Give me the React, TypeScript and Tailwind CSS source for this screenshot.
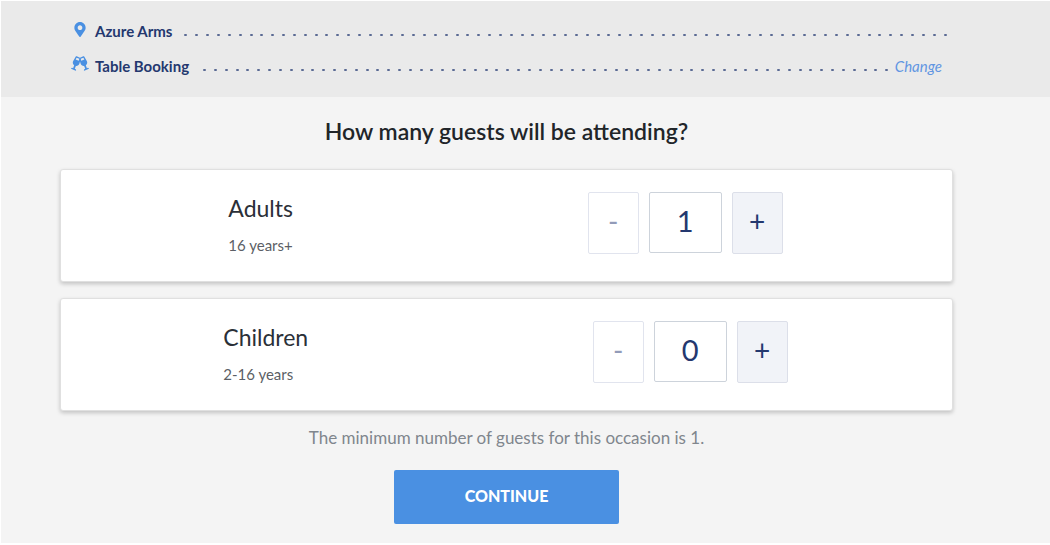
import { useState } from "react";
import { FaGlassCheers, FaMapMarkerAlt } from "react-icons/fa";

function Leader({ dots }: { dots: number }) {
  return (
    <div className="mt-2 flex min-w-0 flex-1 justify-between overflow-hidden" aria-hidden="true">
      {Array.from({ length: dots }, (_, i) => (
        <span key={i} className="h-0.5 w-[3px] shrink-0 rounded-[1px] bg-[#5a6a93]" />
      ))}
    </div>
  );
}

function Stepper({ id, value, min, onChange }: { id: string; value: number; min: number; onChange: (n: number) => void }) {
  return (
    <div className="flex gap-2.5">
      <button
        type="button"
        aria-label="Decrease"
        disabled={value <= min}
        onClick={() => onChange(value - 1)}
        className="h-[62px] w-[51px] rounded-xs border border-[#e1e4ee] bg-white pb-1 text-[28px] text-[#24386f] disabled:text-[#929bb8]"
      >
        -
      </button>
      <input
        id={id}
        type="text"
        inputMode="numeric"
        value={value}
        onChange={(e) => onChange(Math.max(min, Number(e.target.value) || min))}
        className="h-[61px] w-[73px] rounded-xs border border-[#cdd3db] bg-white pb-1 text-center text-[29px] text-[#24386f] outline-none"
      />
      <button
        type="button"
        aria-label="Increase"
        onClick={() => onChange(value + 1)}
        className="h-[62px] w-[51px] rounded-xs border border-[#dcdfe9] bg-[#f1f3f8] pb-1 text-[28px] text-[#24386f]"
      >
        +
      </button>
    </div>
  );
}

function GuestCard(props: { id: string; title: string; note: string; value: number; min: number; onChange: (n: number) => void }) {
  return (
    <div className="flex items-start justify-around rounded-[3px] border border-[#e0e0e0] bg-white pt-[22px] pr-[22px] pb-[26px] pl-5 shadow-[0_2px_4px_rgba(0,0,0,0.2)]">
      <div>
        <label htmlFor={props.id} className="block text-[23px] leading-8 text-[#2b3038]">
          {props.title}
        </label>
        <p className="mt-[11px] text-[15px] leading-5 text-[#5c5f66]">{props.note}</p>
      </div>
      <Stepper id={props.id} value={props.value} min={props.min} onChange={props.onChange} />
    </div>
  );
}

export default function App() {
  const [adults, setAdults] = useState(1);
  const [children, setChildren] = useState(0);

  return (
    <div className="min-h-screen border-t border-b-2 border-l border-white bg-[#f4f4f4] font-['Lato',sans-serif]">
      <header className="flex flex-col gap-[15px] bg-[#eaeaea] pt-5 pr-[108px] pb-[21px] pl-[70px] text-[15px] leading-5 text-[#24386f]">
        <div className="-mr-[5px] flex h-5 items-center">
          <FaMapMarkerAlt className="mb-1 w-[18px] text-[15px] text-[#4a90e2]" />
          <span className="mr-3 ml-1.5 font-bold">Azure Arms</span>
          <Leader dots={71} />
        </div>
        <div className="flex h-5 items-center">
          <FaGlassCheers className="mb-1.5 w-[18px] text-[15px] text-[#4a90e2]" />
          <span className="mr-3.5 ml-1.5 font-bold">Table Booking</span>
          <Leader dots={64} />
          <a href="#change" className="ml-1.5 text-[#6296e2] italic">
            Change
          </a>
        </div>
      </header>

      <main className="flex flex-col pt-[18px] pr-[97px] pb-4 pl-[59px]">
        <h1 className="text-center text-[23px] leading-8 font-semibold text-[#212529]">How many guests will be attending?</h1>
        <div className="mt-[22px] flex flex-col gap-4">
          <GuestCard id="adults" title="Adults" note="16 years+" value={adults} min={1} onChange={setAdults} />
          <GuestCard id="children" title="Children" note="2-16 years" value={children} min={0} onChange={setChildren} />
        </div>
        <p className="mt-[15px] text-center text-[17px] leading-6 text-[#80868d]">The minimum number of guests for this occasion is 1.</p>
        <button type="button" className="mt-5 h-[54px] w-[225px] self-center rounded-xs bg-[#4a90e2] pb-0.5 text-base font-black text-white">
          CONTINUE
        </button>
      </main>
    </div>
  );
}
